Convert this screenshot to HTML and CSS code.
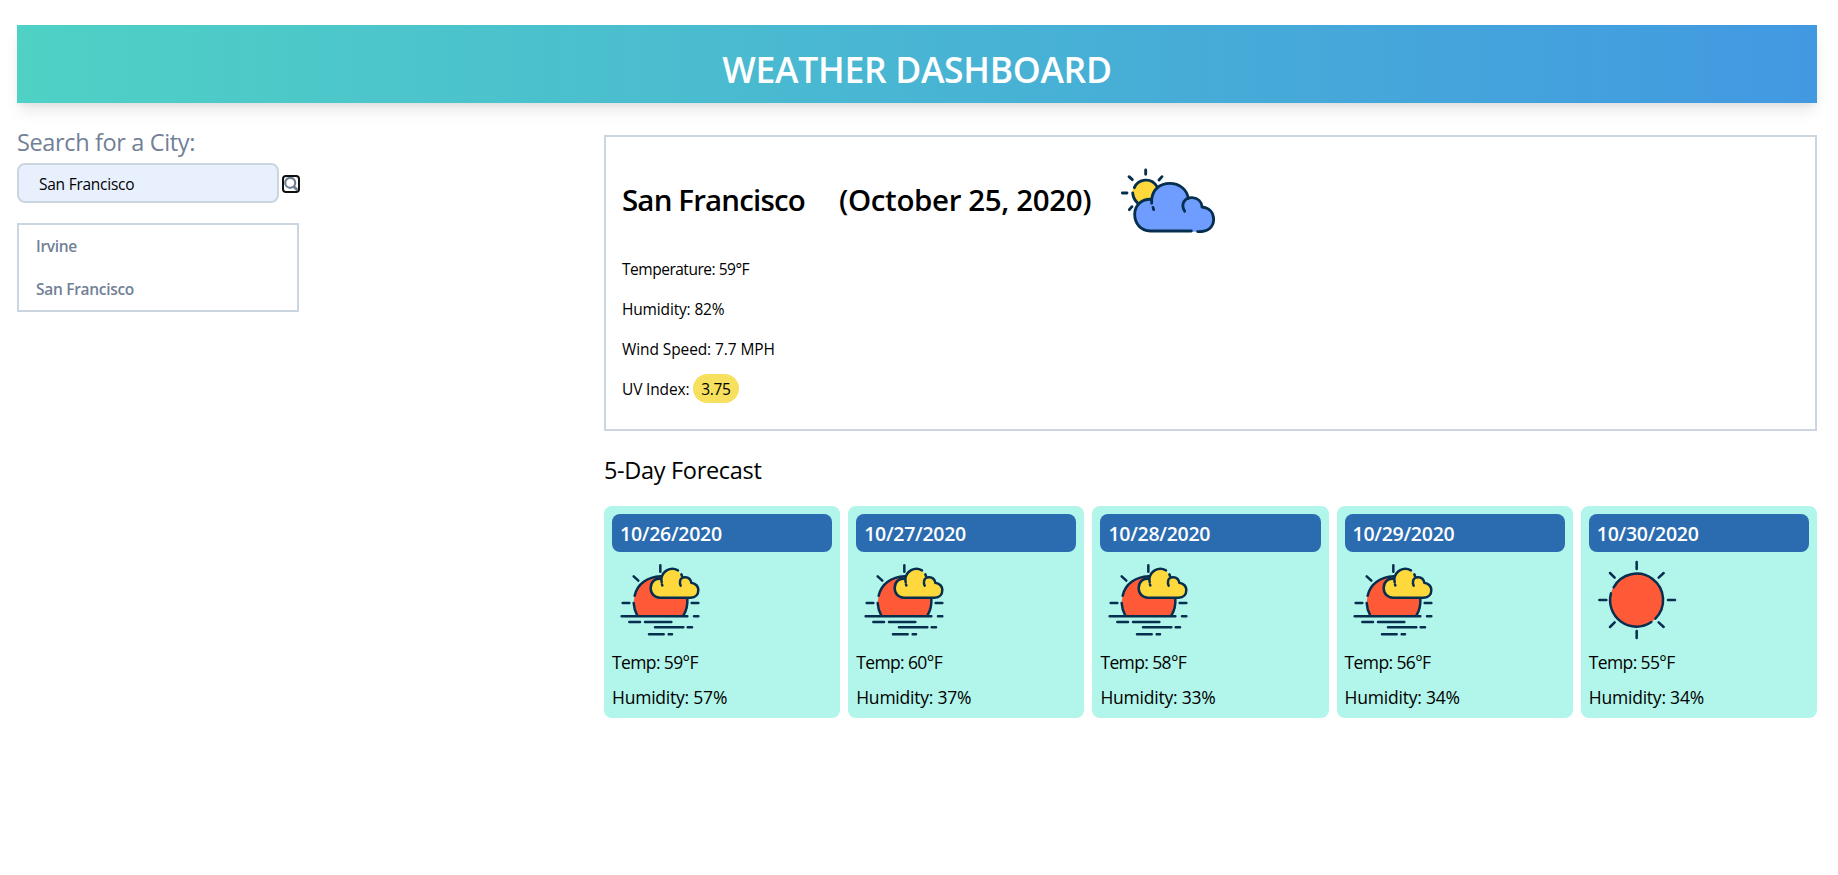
FILE: index.html
```html
<!DOCTYPE html>
<html lang="en">
<head>
<meta charset="utf-8">
<title>Weather Dashboard</title>
<link rel="stylesheet" href="styles.css">
</head>
<body>
<svg class="defs" width="0" height="0" aria-hidden="true">
  <symbol id="sunset" viewBox="36 159 288 288">
    <path d="M112 350C101 330 99 312 104 292C112 254 142 233 183 232C230 240 262 275 262 314C261 330 257 340 250 350Z" fill="#ff5a38"/>
    <path d="M112 350Q102 332 101 312M104 290C112 254 142 234 183 232M262 296Q264 328 250 350" class="ink"/>
    <path d="M180 296C162 295 152 284 152 267C152 250 164 237 184 238C187 220 198 209 215 209C231 209 242 220 246 236C260 230 272 240 274 251C288 254 295 263 295 273C295 287 286 296 272 296Z" fill="#ffd83b"/>
    <path d="M234 214C211 202 187 216 184 240C165 236 152 249 152 267C152 284 163 296 180 296H272C287 296 295 286 295 273C295 262 288 254 274 251C270 230 241 230 240 248Q239 255 242 260M184 240L185 250M186 257L187 259M244 226L246 231" class="ink"/>
    <path d="M181 199V218M101 232L115 245M68 312H88M275 312H295M65 352H262M282 352H295M88 369H120M135 369H214M165 385H250M263 385H276M147 406H191M206 406H216" class="ink"/>
  </symbol>
  <symbol id="sun" viewBox="57 159 288 288">
    <circle cx="200" cy="303" r="80" fill="#ff5a38"/>
    <path d="M131 265A79 79 0 1 1 256 359M244 369A79 79 0 0 1 123 283" class="ink"/>
    <path d="M200 189V210M200 396V417M88 303H109M294 303H315M120 222L134 236M266 236L281 222M120 384L134 370M266 370L281 384" class="ink"/>
  </symbol>
  <symbol id="cloud" viewBox="0 0 360 255">
    <circle cx="106" cy="99" r="39" fill="#ffd83b"/>
    <path d="M73 83C84 57 124 50 141 80M68 99Q70 118 84 130" class="ink thick"/>
    <path d="M121 213C92 212 74 191 74 162C75 133 97 116 125 118C128 88 150 70 179 70C208 70 230 88 235 115C253 107 273 120 276 141C298 143 311 158 311 179C310 201 294 215 273 215Z" fill="#6f9dff"/>
    <path d="M244 213H121C92 212 74 191 74 162C75 133 97 116 125 118C128 88 150 70 179 70C208 70 231 88 235 116M125 118V130M129 142L131 149M224 154C210 130 226 112 247 113C264 114 275 125 276 141C298 143 311 158 311 179C310 201 294 216 263 215" class="ink thick"/>
    <path d="M107 30V43M57 50L67 59M156 50L147 60M37 99H51M66 140L58 149" class="ink thick"/>
  </symbol>
</svg>

<header class="banner"><h1>WEATHER DASHBOARD</h1></header>
<div class="layout">
  <aside class="sidebar">
    <label class="search-label" for="city">Search for a City:</label>
    <form class="search">
      <input id="city" class="city-input" type="text" value="San Francisco">
      <button class="search-button" type="button" aria-label="Search">
        <svg width="14" height="14" viewBox="0 0 14 14"><circle cx="6.2" cy="5.8" r="5" fill="none" stroke="#718096" stroke-width="2.2"/><path d="M9.5 9.2L13.5 13.2" stroke="#718096" stroke-width="2.8"/></svg>
      </button>
    </form>
    <ul class="history"><li>Irvine</li><li>San Francisco</li></ul>
  </aside>
  <main class="main">
    <section class="current">
      <div class="current-head">
        <h2 class="city">San Francisco</h2><h2 class="today">(October 25, 2020)</h2>
        <svg class="current-icon"><use href="#cloud"/></svg>
      </div>
      <p class="temp">Temperature: 59°F</p>
      <p>Humidity: 82%</p>
      <p class="wind">Wind Speed: 7.7 MPH</p>
      <p>UV Index: <span class="uv">3.75</span></p>
    </section>
    <h3 class="forecast-title">5-Day Forecast</h3>
    <section class="forecast">
      <article class="day"><h4>10/26/2020</h4><svg class="day-icon"><use href="#sunset"/></svg><p class="temp">Temp: 59°F</p><p>Humidity: 57%</p></article>
      <article class="day"><h4>10/27/2020</h4><svg class="day-icon"><use href="#sunset"/></svg><p class="temp">Temp: 60°F</p><p>Humidity: 37%</p></article>
      <article class="day"><h4>10/28/2020</h4><svg class="day-icon"><use href="#sunset"/></svg><p class="temp">Temp: 58°F</p><p>Humidity: 33%</p></article>
      <article class="day"><h4>10/29/2020</h4><svg class="day-icon"><use href="#sunset"/></svg><p class="temp">Temp: 56°F</p><p>Humidity: 34%</p></article>
      <article class="day"><h4>10/30/2020</h4><svg class="day-icon"><use href="#sun"/></svg><p class="temp">Temp: 55°F</p><p>Humidity: 34%</p></article>
    </section>
  </main>
</div>
</body>
</html>
```
FILE: styles.css
```css
* { box-sizing: border-box; }
body { margin: 0; padding: 25px 21px 0 17px; background: #fff; color: #000; font-family: "Open Sans", "Noto Sans", sans-serif; font-size: 15.5px; }
h1, h2, h3, h4, p, ul { margin: 0; padding: 0; font-weight: 400; }
.defs { position: absolute; }
.ink { fill: none; stroke: #062e4f; stroke-width: 7.5; stroke-linecap: round; stroke-linejoin: round; }
.thick { stroke-width: 8.5; }

.banner { height: 78px; padding-top: 17px; background: linear-gradient(to right, #4fd1c5, #4299e1); box-shadow: 0 10px 15px -3px rgba(0,0,0,.1), 0 4px 6px -2px rgba(0,0,0,.05); text-align: center; }
.banner h1 { color: #fff; font-size: 35.5px; font-weight: 600; line-height: 54px; letter-spacing: -0.3px; }

.layout { display: grid; grid-template-columns: 587px 1fr; }
.sidebar { padding-top: 22px; color: #718096; }
.search-label { display: block; height: 38px; line-height: 34px; font-size: 23.5px; letter-spacing: -0.36px; }
.search { display: flex; align-items: center; gap: 3px; height: 40px; }
.city-input { width: 262px; height: 40px; padding: 2px 20px 0; border: 2px solid #cbd5e0; border-radius: 8px; background: #e8f0fe; color: #000; font: inherit; font-size: 15.5px; letter-spacing: -0.25px; }
.search-button { display: flex; align-items: center; justify-content: center; width: 18px; height: 18px; margin-top: 2px; padding: 0; border: 2px solid #101010; border-radius: 4px; background: #fff; }
.history { width: 282px; height: 89px; margin-top: 20px; padding-left: 17px; border: 2px solid #cbd5e0; list-style: none; font-weight: 600; letter-spacing: -0.3px; }
.history li { height: 43px; line-height: 43px; }

.main { padding-top: 32px; }
.current { height: 296px; padding: 23px 16px 0; border: 2px solid #cbd5e0; letter-spacing: -0.16px; }
.current-head { display: flex; height: 85px; }
.current-head h2 { font-size: 29.5px; font-weight: 600; line-height: 80px; letter-spacing: -0.85px; white-space: nowrap; }
.current-head .city { width: 217px; }
.current-head .today { width: 271px; letter-spacing: -0.37px; }
.current-icon { width: 120px; height: 85px; }
.current p { height: 40px; line-height: 48px; }
.current .temp { letter-spacing: -0.48px; }
.current .wind { letter-spacing: -0.1px; }
.uv { display: inline-block; width: 46px; height: 29px; padding-left: 8px; border-radius: 15px; background: #f6e05e; line-height: 30px; vertical-align: top; margin-top: 9px; letter-spacing: -0.3px; }
.forecast-title { height: 75px; padding-top: 21px; line-height: 36px; font-size: 23.5px; letter-spacing: -0.32px; }
.forecast { display: grid; grid-template-columns: repeat(5, 1fr); gap: 8px; }
.day { height: 212px; padding: 8px; border-radius: 8px; background: #b2f5ea; }
.day h4 { height: 38px; padding-left: 8px; border-radius: 8px; background: #2b6cb0; color: #fff; font-size: 19.5px; font-weight: 600; line-height: 40px; letter-spacing: -0.26px; }
.day-icon { display: block; width: 96px; height: 96px; }
.day p { height: 35px; line-height: 28px; font-size: 17.5px; letter-spacing: -0.22px; }
.day .temp { letter-spacing: -0.62px; }
```
